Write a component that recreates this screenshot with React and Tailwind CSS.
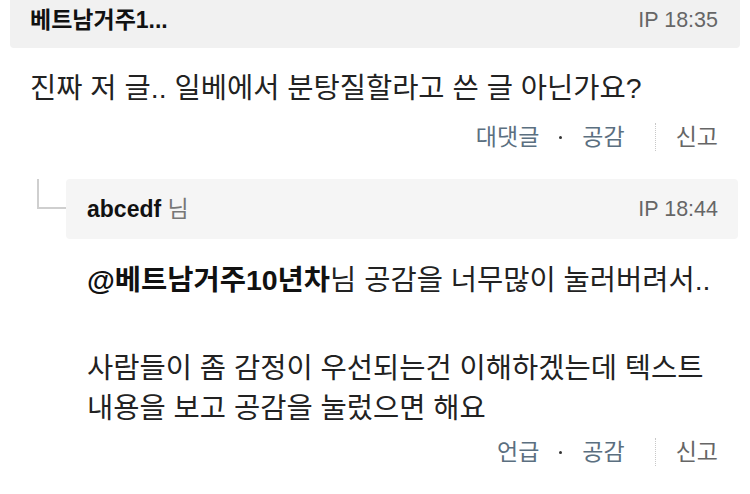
import React from 'react';

const font = { fontFamily: '"Liberation Sans", "Noto Sans CJK KR", "Noto Sans", sans-serif' };

const Actions = ({ first }) => (
  <div className="flex items-center justify-end pr-[32px] text-[23px] leading-none">
    <span className="text-[#5b6f80]">{first}</span>
    <span className="mx-[20px] w-[3px] h-[3px] rounded-full bg-[#333]"></span>
    <span className="text-[#5b6f80]">공감</span>
    <span className="ml-[30px] mr-[20px] h-[28px] border-l border-dotted border-[#c8c8c8]"></span>
    <span className="text-[#666]">신고</span>
  </div>
);

const App = () => {
  return (
    <div className="w-[750px] h-[494px] bg-white overflow-hidden text-[#222]" style={font}>
      {/* parent comment header */}
      <div className="mx-[10px] h-[48px] pb-2 bg-[#f1f1f1] rounded-b-[4px] flex items-center justify-between pl-[20px] pr-[22px]">
        <span className="text-[23px] font-bold text-[#111]">베트남거주1...</span>
        <span className="text-[21.5px] text-[#666]">IP 18:35</span>
      </div>

      <p className="px-[30px] pt-[20px] text-[28.5px] leading-[40px] text-[#222]">
        진짜 저 글.. 일베에서 분탕질할라고 쓴 글 아닌가요?
      </p>

      <div className="mt-[15px]">
        <Actions first="대댓글" />
      </div>

      {/* reply */}
      <div className="flex mt-[28px]">
        <div className="w-[66px] shrink-0 pl-[37px]">
          <div className="w-[29px] h-[30px] border-l-2 border-b-2 border-[#cfcfcf]"></div>
        </div>
        <div className="flex-1 mr-[12px]">
          <div className="h-[60px] bg-[#f5f5f5] rounded-[4px] flex items-center justify-between pl-[21px] pr-[20px]">
            <span className="text-[23px] font-bold text-[#111]">
              abcedf <span className="font-normal text-[#777]">님</span>
            </span>
            <span className="text-[21.5px] text-[#666]">IP 18:44</span>
          </div>

          <div className="pl-[21px] pt-[21px] text-[28.5px] leading-[40px] text-[#222]">
            <p>
              <span className="font-bold text-[#111]">@베트남거주10년차</span>님 공감을 너무많이 눌러버려서..
            </p>
            <p className="mt-[48px]">사람들이 좀 감정이 우선되는건 이해하겠는데 텍스트</p>
            <p>내용을 보고 공감을 눌렀으면 해요</p>
          </div>
        </div>
      </div>

      <div className="mt-[10px]">
        <Actions first="언급" />
      </div>
    </div>
  );
};

export default App;
